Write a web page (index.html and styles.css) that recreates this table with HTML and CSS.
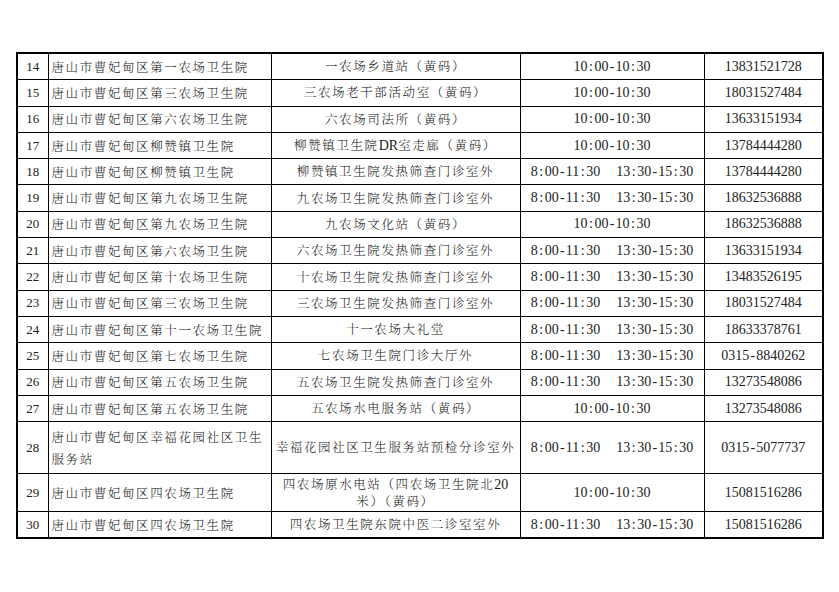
FILE: index.html
```html
<!DOCTYPE html>
<html lang="zh-CN">
<head>
<meta charset="utf-8">
<title>核酸检测点</title>
<link rel="stylesheet" href="styles.css">
</head>
<body>
<table class="sheet">
  <colgroup>
    <col class="c-no"><col class="c-org"><col class="c-site"><col class="c-time"><col class="c-tel">
  </colgroup>
  <tbody>
    <tr><td class="no">14</td><td class="org">唐山市曹妃甸区第一农场卫生院</td><td class="site">一农场乡道站（黄码）</td><td class="time"><span class="t">10<i>:</i>00<i>-</i>10<i>:</i>30</span></td><td class="tel">13831521728</td></tr>
    <tr><td class="no">15</td><td class="org">唐山市曹妃甸区第三农场卫生院</td><td class="site">三农场老干部活动室（黄码）</td><td class="time"><span class="t">10<i>:</i>00<i>-</i>10<i>:</i>30</span></td><td class="tel">18031527484</td></tr>
    <tr><td class="no">16</td><td class="org">唐山市曹妃甸区第六农场卫生院</td><td class="site">六农场司法所（黄码）</td><td class="time"><span class="t">10<i>:</i>00<i>-</i>10<i>:</i>30</span></td><td class="tel">13633151934</td></tr>
    <tr><td class="no">17</td><td class="org">唐山市曹妃甸区柳赞镇卫生院</td><td class="site">柳赞镇卫生院<span class="lat">DR</span>室走廊（黄码）</td><td class="time"><span class="t">10<i>:</i>00<i>-</i>10<i>:</i>30</span></td><td class="tel">13784444280</td></tr>
    <tr><td class="no">18</td><td class="org">唐山市曹妃甸区柳赞镇卫生院</td><td class="site">柳赞镇卫生院发热筛查门诊室外</td><td class="time"><span class="t">8<i>:</i>00<i>-</i>11<i>:</i>30</span><span class="t t2">13<i>:</i>30<i>-</i>15<i>:</i>30</span></td><td class="tel">13784444280</td></tr>
    <tr><td class="no">19</td><td class="org">唐山市曹妃甸区第九农场卫生院</td><td class="site">九农场卫生院发热筛查门诊室外</td><td class="time"><span class="t">8<i>:</i>00<i>-</i>11<i>:</i>30</span><span class="t t2">13<i>:</i>30<i>-</i>15<i>:</i>30</span></td><td class="tel">18632536888</td></tr>
    <tr><td class="no">20</td><td class="org">唐山市曹妃甸区第九农场卫生院</td><td class="site">九农场文化站（黄码）</td><td class="time"><span class="t">10<i>:</i>00<i>-</i>10<i>:</i>30</span></td><td class="tel">18632536888</td></tr>
    <tr><td class="no">21</td><td class="org">唐山市曹妃甸区第六农场卫生院</td><td class="site">六农场卫生院发热筛查门诊室外</td><td class="time"><span class="t">8<i>:</i>00<i>-</i>11<i>:</i>30</span><span class="t t2">13<i>:</i>30<i>-</i>15<i>:</i>30</span></td><td class="tel">13633151934</td></tr>
    <tr><td class="no">22</td><td class="org">唐山市曹妃甸区第十农场卫生院</td><td class="site">十农场卫生院发热筛查门诊室外</td><td class="time"><span class="t">8<i>:</i>00<i>-</i>11<i>:</i>30</span><span class="t t2">13<i>:</i>30<i>-</i>15<i>:</i>30</span></td><td class="tel">13483526195</td></tr>
    <tr><td class="no">23</td><td class="org">唐山市曹妃甸区第三农场卫生院</td><td class="site">三农场卫生院发热筛查门诊室外</td><td class="time"><span class="t">8<i>:</i>00<i>-</i>11<i>:</i>30</span><span class="t t2">13<i>:</i>30<i>-</i>15<i>:</i>30</span></td><td class="tel">18031527484</td></tr>
    <tr><td class="no">24</td><td class="org">唐山市曹妃甸区第十一农场卫生院</td><td class="site">十一农场大礼堂</td><td class="time"><span class="t">8<i>:</i>00<i>-</i>11<i>:</i>30</span><span class="t t2">13<i>:</i>30<i>-</i>15<i>:</i>30</span></td><td class="tel">18633378761</td></tr>
    <tr><td class="no">25</td><td class="org">唐山市曹妃甸区第七农场卫生院</td><td class="site">七农场卫生院门诊大厅外</td><td class="time"><span class="t">8<i>:</i>00<i>-</i>11<i>:</i>30</span><span class="t t2">13<i>:</i>30<i>-</i>15<i>:</i>30</span></td><td class="tel">0315<i>-</i>8840262</td></tr>
    <tr><td class="no">26</td><td class="org">唐山市曹妃甸区第五农场卫生院</td><td class="site">五农场卫生院发热筛查门诊室外</td><td class="time"><span class="t">8<i>:</i>00<i>-</i>11<i>:</i>30</span><span class="t t2">13<i>:</i>30<i>-</i>15<i>:</i>30</span></td><td class="tel">13273548086</td></tr>
    <tr><td class="no">27</td><td class="org">唐山市曹妃甸区第五农场卫生院</td><td class="site">五农场水电服务站（黄码）</td><td class="time"><span class="t">10<i>:</i>00<i>-</i>10<i>:</i>30</span></td><td class="tel">13273548086</td></tr>
    <tr class="tall"><td class="no">28</td><td class="org">唐山市曹妃甸区幸福花园社区卫生<br>服务站</td><td class="site">幸福花园社区卫生服务站预检分诊室外</td><td class="time"><span class="t">8<i>:</i>00<i>-</i>11<i>:</i>30</span><span class="t t2">13<i>:</i>30<i>-</i>15<i>:</i>30</span></td><td class="tel">0315<i>-</i>5077737</td></tr>
    <tr class="mid"><td class="no">29</td><td class="org">唐山市曹妃甸区四农场卫生院</td><td class="site">四农场原水电站（四农场卫生院北<span class="lat">20</span><br>米）（黄码）</td><td class="time"><span class="t">10<i>:</i>00<i>-</i>10<i>:</i>30</span></td><td class="tel">15081516286</td></tr>
    <tr><td class="no">30</td><td class="org">唐山市曹妃甸区四农场卫生院</td><td class="site">四农场卫生院东院中医二诊室室外</td><td class="time"><span class="t">8<i>:</i>00<i>-</i>11<i>:</i>30</span><span class="t t2">13<i>:</i>30<i>-</i>15<i>:</i>30</span></td><td class="tel">15081516286</td></tr>
  </tbody>
</table>
</body>
</html>
```
FILE: styles.css
```css
html, body {
  margin: 0;
  padding: 0;
  background: #ffffff;
}

body {
  padding: 52px 0 0 16px;
  color: #222222;
  font-family: "Noto Serif CJK SC", "Liberation Serif", "Noto Sans CJK SC", serif;
}

.sheet {
  border-collapse: collapse;
  table-layout: fixed;
  width: 806px;
  border: 2px solid #000;
}

.c-no { width: 31px; }
.c-org { width: 223px; }
.c-site { width: 249px; }
.c-time { width: 184px; }
.c-tel { width: 119px; }

.sheet td {
  border: 1px solid #000;
  height: 25.3px;
  padding: 0 3px;
  vertical-align: middle;
  white-space: nowrap;
  overflow: hidden;
}

.sheet tr.tall td { height: 51px; }
.sheet tr.mid td { height: 37px; }

.no {
  text-align: center;
  font-family: "Liberation Serif", serif;
  font-size: 13px;
  padding: 0;
}

.org, .site {
  font-family: "Noto Serif CJK SC", "Noto Sans CJK SC", sans-serif;
  font-weight: 300;
  font-size: 12.5px;
  letter-spacing: 1.6px;
  line-height: 22px;
}

.org { text-align: left; }

.site {
  text-align: center;
  line-height: 17px;
}

.lat {
  font-family: "Liberation Serif", serif;
  font-size: 14px;
  letter-spacing: 0;
}

.time, .tel {
  text-align: center;
  font-family: "Liberation Serif", serif;
  font-size: 14px;
}

.t { display: inline-block; }
.t2 { margin-left: 16px; }

.sheet i {
  font-style: normal;
  display: inline-block;
  width: 7px;
  text-align: center;
}
```
